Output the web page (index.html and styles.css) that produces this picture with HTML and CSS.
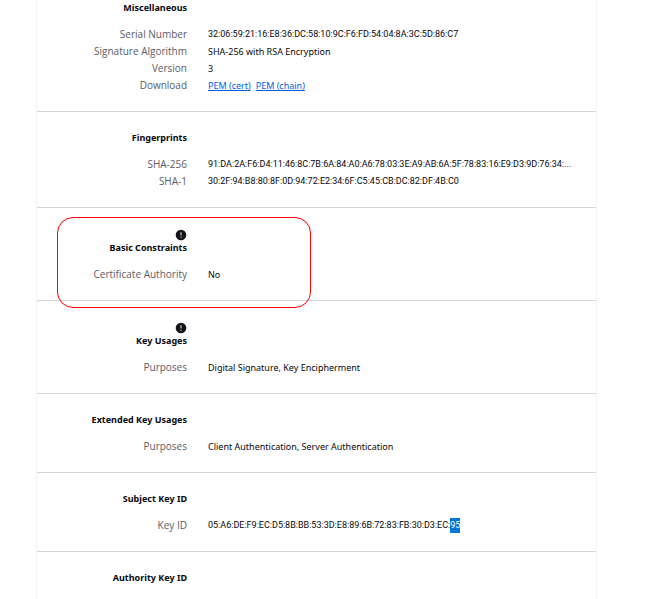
FILE: index.html
```
<!DOCTYPE html>
<html lang="en">
<head>
<meta charset="utf-8">
<title>Certificate</title>
<link rel="stylesheet" href="styles.css">
</head>
<body>
<main class="certificate">
  <section class="group">
    <h2 class="title">Miscellaneous</h2>
    <dl class="fields">
      <dt>Serial Number</dt><dd class="hex">32:06:59:21:16:E8:36:DC:58:10:9C:F6:FD:54:04:8A:3C:5D:86:C7</dd>
      <dt>Signature Algorithm</dt><dd>SHA-256 with RSA Encryption</dd>
      <dt>Version</dt><dd>3</dd>
      <dt>Download</dt><dd class="links"><a href="#cert">PEM (cert)</a><a href="#chain">PEM (chain)</a></dd>
    </dl>
  </section>
  <section class="group">
    <h2 class="title">Fingerprints</h2>
    <dl class="fields">
      <dt>SHA-256</dt><dd class="hex">91:DA:2A:F6:D4:11:46:8C:7B:6A:84:A0:A6:78:03:3E:A9:AB:6A:5F:78:83:16:E9:D3:9D:76:34:...</dd>
      <dt>SHA-1</dt><dd class="hex">30:2F:94:B8:80:8F:0D:94:72:E2:34:6F:C5:45:CB:DC:82:DF:4B:C0</dd>
    </dl>
  </section>
  <section class="group marked">
    <svg class="critical" viewBox="0 0 12 16" aria-hidden="true"><circle cx="6" cy="10" r="5.3" fill="#15141a"/><path d="M6 7.2v3.2M6 11.8v1" stroke="#d8d8d8" stroke-width="1.1"/></svg>
    <h2 class="title">Basic Constraints</h2>
    <dl class="fields">
      <dt>Certificate Authority</dt><dd>No</dd>
    </dl>
  </section>
  <section class="group">
    <svg class="critical" viewBox="0 0 12 16" aria-hidden="true"><circle cx="6" cy="10" r="5.3" fill="#15141a"/><path d="M6 7.2v3.2M6 11.8v1" stroke="#d8d8d8" stroke-width="1.1"/></svg>
    <h2 class="title">Key Usages</h2>
    <dl class="fields">
      <dt>Purposes</dt><dd>Digital Signature, Key Encipherment</dd>
    </dl>
  </section>
  <section class="group">
    <h2 class="title">Extended Key Usages</h2>
    <dl class="fields">
      <dt>Purposes</dt><dd>Client Authentication, Server Authentication</dd>
    </dl>
  </section>
  <section class="group">
    <h2 class="title">Subject Key ID</h2>
    <dl class="fields">
      <dt>Key ID</dt><dd class="hex">05:A6:DE:F9:EC:D5:8B:BB:53:3D:E8:89:6B:72:83:FB:30:D3:EC:<span class="selected">95</span></dd>
    </dl>
  </section>
  <section class="group">
    <h2 class="title">Authority Key ID</h2>
  </section>
</main>
</body>
</html>
```
FILE: styles.css
```
* {
  box-sizing: border-box;
}

body {
  margin: 0;
  padding: 0 53px 0 36px;
  height: 100vh;
  overflow: hidden;
  background: #fff;
  color: #08070c;
  font: 9px/17px "Noto Sans", "Open Sans", sans-serif;
}

/* Scrolled so that the first group starts above the window */
.certificate {
  margin-top: -18px;
  min-height: calc(100vh + 18px);
  border: solid #f3f3f3;
  border-width: 0 1px;
}

.group {
  position: relative;
  padding: 17px 0;
  border-bottom: 1px solid #d7d7db;
}

.group:last-child {
  border-bottom: 0;
}

.title {
  width: 150px;
  margin: 0;
  font-size: 9px;
  font-weight: 700;
  text-align: right;
}

.fields {
  display: grid;
  grid-template-columns: 150px minmax(0, 1fr);
  column-gap: 21px;
  margin: 10px 0 0;
}

.fields dt {
  color: #5b5b66;
  font-family: "Open Sans", "Noto Sans", sans-serif;
  font-size: 10px;
  text-align: right;
}

.fields dd {
  margin: 0;
  white-space: nowrap;
}

.fields .hex {
  font-family: Roboto, "Open Sans", sans-serif;
}

.links {
  display: flex;
  gap: 5px;
}

.links a {
  color: #0060df;
}

.critical {
  display: block;
  width: 12px;
  height: 16px;
  margin: 0 0 -2px 138px;
}

.selected {
  display: inline-block;
  height: 15px;
  line-height: 15px;
  background: #0078d7;
  color: #fff;
}

/* Highlight drawn around one group */
.marked::after {
  content: "";
  box-sizing: border-box;
  position: absolute;
  top: 9px;
  left: 20px;
  width: 254px;
  height: 91px;
  border: 1px solid #f00;
  border-radius: 16px;
}
```
